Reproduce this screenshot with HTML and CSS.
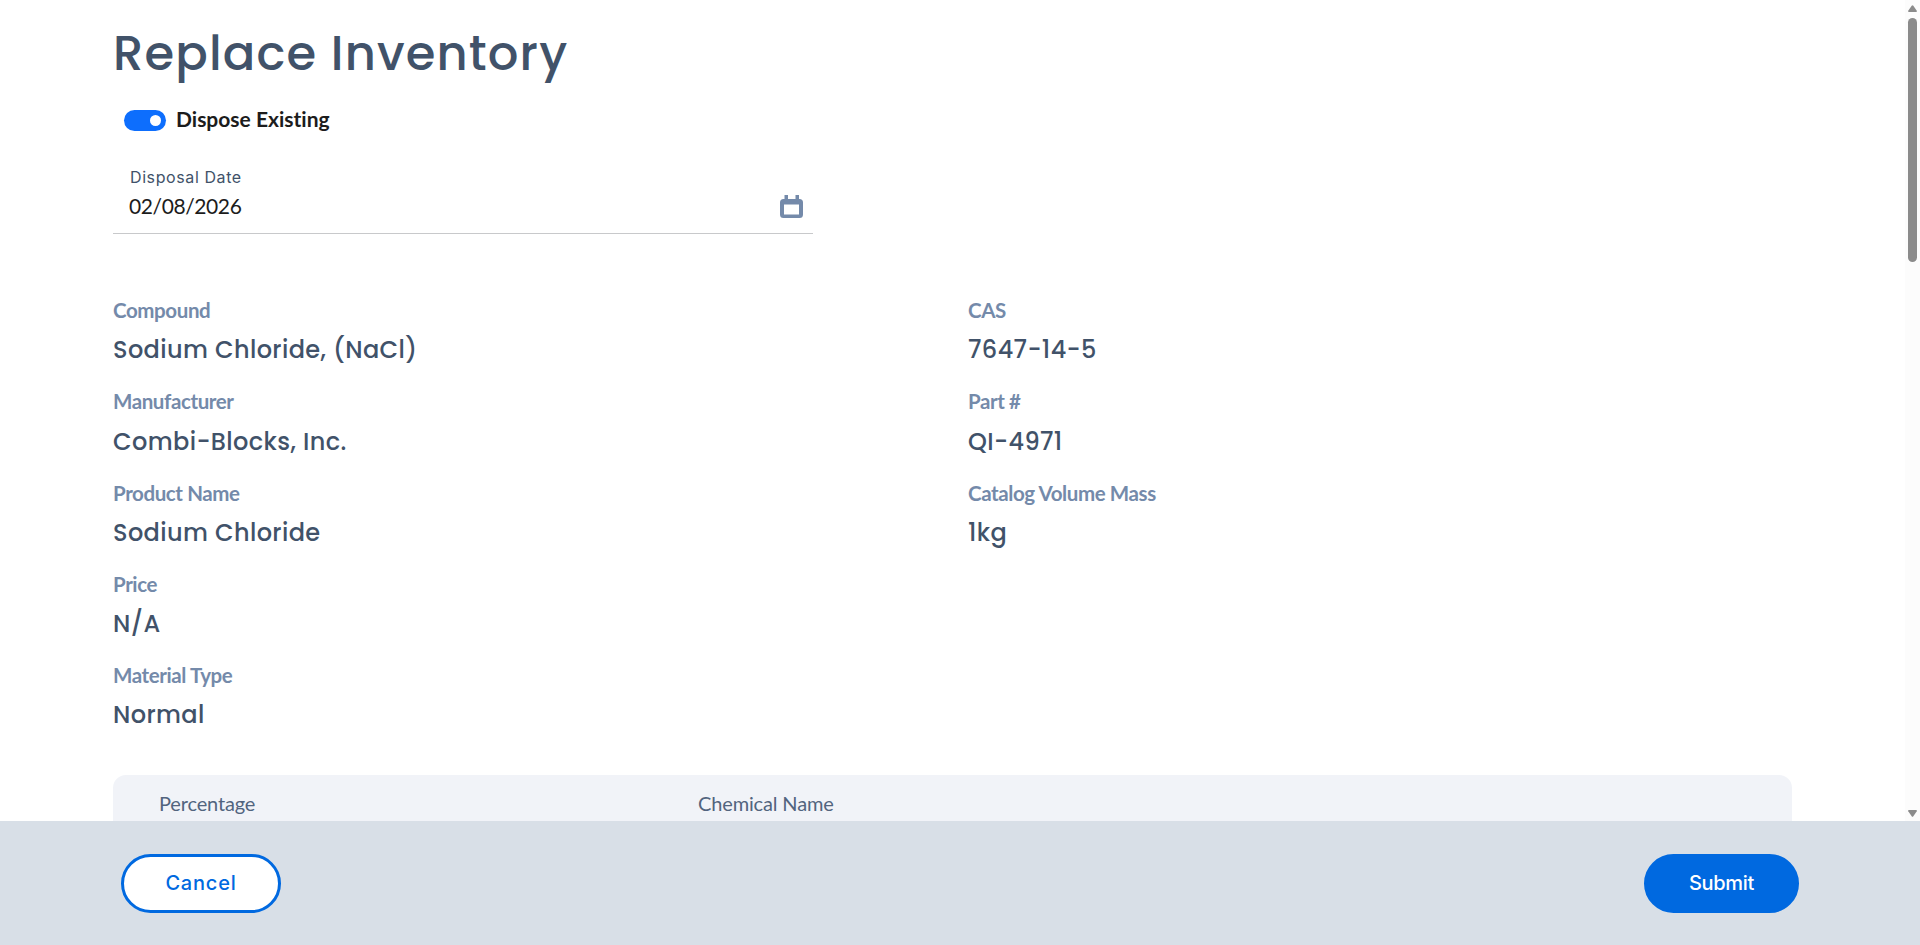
FILE: index.html
```
<!DOCTYPE html>
<html lang="en">
<head>
    <meta charset="UTF-8">
    <meta name="viewport" content="width=device-width, initial-scale=1.0">
    <title>Replace Inventory</title>
    <link rel="stylesheet" href="styles.css">
</head>
<body>

<div class="page">
    <main class="content">
        <h1>Replace Inventory</h1>

        <label class="switch-row">
            <span class="switch"><span class="switch-knob"></span></span>
            <span class="switch-label">Dispose Existing</span>
        </label>

        <div class="date-field">
            <div class="date-text">
                <span class="date-label">Disposal Date</span>
                <span class="date-value">02/08/2026</span>
            </div>
            <svg class="date-icon" width="24" height="24" viewBox="0 0 24 24">
                <path fill="#748aaa" fill-rule="evenodd" d="M4.500 0H8v4h7.500V0H19v4h.5a3.500 3.500 0 0 1 3.500 3.500V19.500a3.500 3.500 0 0 1-3.500 3.500H3.500A3.500 3.500 0 0 1 0 19.500V7.500A3.500 3.500 0 0 1 3.500 4h1zM4 9.500V19.500h15V9.500z"/>
            </svg>
        </div>

        <div class="details">
            <dl class="detail-col">
                <dt>Compound</dt>
                <dd>Sodium Chloride, (NaCl)</dd>
                <dt>Manufacturer</dt>
                <dd>Combi-Blocks, Inc.</dd>
                <dt>Product Name</dt>
                <dd>Sodium Chloride</dd>
                <dt>Price</dt>
                <dd>N/A</dd>
                <dt>Material Type</dt>
                <dd>Normal</dd>
            </dl>
            <dl class="detail-col">
                <dt>CAS</dt>
                <dd>7647-14-5</dd>
                <dt>Part #</dt>
                <dd>QI-4971</dd>
                <dt>Catalog Volume Mass</dt>
                <dd>1kg</dd>
            </dl>
        </div>

        <div class="table-head">
            <span>Percentage</span>
            <span>Chemical Name</span>
        </div>
    </main>

    <div class="scrollbar">
        <svg width="9" height="8" viewBox="0 0 9 8"><path fill="#8b8b8b" d="M3.700.7q.8-1 1.600 0L8.800 5.800q.5 1.200-.8 1.200H1Q-.3 7 .2 5.800z"/></svg>
        <div class="scroll-thumb"></div>
        <svg class="scroll-down" width="9" height="8" viewBox="0 0 9 8"><path fill="#8b8b8b" d="M3.700 6.300q.8 1 1.600 0L8.800 1.200Q9.300 0 8 0H1Q-.3 0 .2 1.200z"/></svg>
    </div>
</div>

<footer>
    <button class="btn btn-cancel">Cancel</button>
    <button class="btn btn-submit">Submit</button>
</footer>

</body>
</html>
```
FILE: styles.css
```
* {
    box-sizing: border-box;
}

body {
    margin: 0;
    height: 100vh;
    display: flex;
    flex-direction: column;
    overflow: hidden;
    background-color: #fff;
    font-family: 'Lato', sans-serif;
    font-variant-ligatures: none;
}

.page {
    display: flex;
    height: 821px;
    overflow: hidden;
}

.content {
    flex: 1;
    padding: 17px 113px 0;
}

h1 {
    margin: 0;
    font-family: 'Poppins', 'Inter', sans-serif;
    font-size: 48px;
    font-weight: 500;
    line-height: 73px;
    letter-spacing: 1.15px;
    color: #415269;
}

.switch-row {
    display: flex;
    align-items: center;
    gap: 10px;
    width: max-content;
    height: 24px;
    margin: 18px 0 0 11px;
}

.switch {
    display: flex;
    align-items: center;
    justify-content: flex-end;
    width: 42px;
    height: 21px;
    padding-right: 5px;
    border-radius: 11px;
    background-color: #0d6efd;
}

.switch-knob {
    width: 11px;
    height: 11px;
    border-radius: 50%;
    background-color: #fff;
}

.switch-label {
    padding-bottom: 2px;
    font-size: 21px;
    font-weight: 700;
    line-height: 24px;
    color: #1c1c1c;
}

.date-field {
    display: flex;
    justify-content: space-between;
    width: 700px;
    height: 75px;
    margin-top: 27px;
    padding: 8px 9px 0 16px;
    border-bottom: 1px solid #c8c9cb;
}

.date-text {
    display: flex;
    flex-direction: column;
}

.date-label {
    padding-left: 1px;
    font-family: 'Inter', sans-serif;
    font-size: 16px;
    line-height: 20px;
    letter-spacing: 0.6px;
    color: #415269;
}

.date-value {
    margin-top: 6px;
    font-size: 21px;
    line-height: 26px;
    letter-spacing: -0.4px;
    color: #1c1c1c;
}

.date-icon {
    margin-top: 28px;
}

.details {
    display: grid;
    grid-template-columns: 855px 1fr;
    margin-top: 62px;
}

.detail-col {
    margin: 0;
}

dt {
    font-size: 20.5px;
    font-weight: 700;
    line-height: 28px;
    letter-spacing: -0.4px;
    color: #748aaa;
}

dd {
    margin: 5.3px 0 16px;
    font-family: 'Poppins', 'Inter', sans-serif;
    font-size: 24px;
    font-weight: 500;
    line-height: 42px;
    letter-spacing: 0.4px;
    color: #415269;
}

.table-head {
    display: grid;
    grid-template-columns: 539px 1fr;
    height: 60px;
    margin-top: 22.5px;
    padding: 16px 46px 0;
    border-radius: 13px 13px 0 0;
    background-color: #f1f3f8;
    font-size: 20px;
    line-height: 24px;
    letter-spacing: -0.15px;
    color: #52647e;
}

.scrollbar {
    display: flex;
    flex-direction: column;
    align-items: center;
    width: 15px;
    padding: 5px 0 3px;
    background-color: #fcfcfc;
}

.scroll-thumb {
    width: 9px;
    height: 244px;
    margin-top: 5px;
    border-radius: 5px;
    background-color: #8b8b8b;
}

.scroll-down {
    margin-top: auto;
}

footer {
    flex: 1;
    display: flex;
    justify-content: space-between;
    align-items: flex-start;
    padding: 33px 121px 0;
    background-color: #d8dfe7;
}

.btn {
    height: 59px;
    padding: 0 0 1px;
    border: 3px solid #0069e0;
    border-radius: 30px;
    font-family: 'Inter', sans-serif;
    font-size: 20px;
    font-weight: 500;
    cursor: pointer;
}

.btn-cancel {
    width: 160px;
    background-color: #fff;
    color: #0069e0;
    letter-spacing: 0.8px;
}

.btn-submit {
    width: 155px;
    background-color: #0069e0;
    color: #fff;
    letter-spacing: -0.3px;
}
```
